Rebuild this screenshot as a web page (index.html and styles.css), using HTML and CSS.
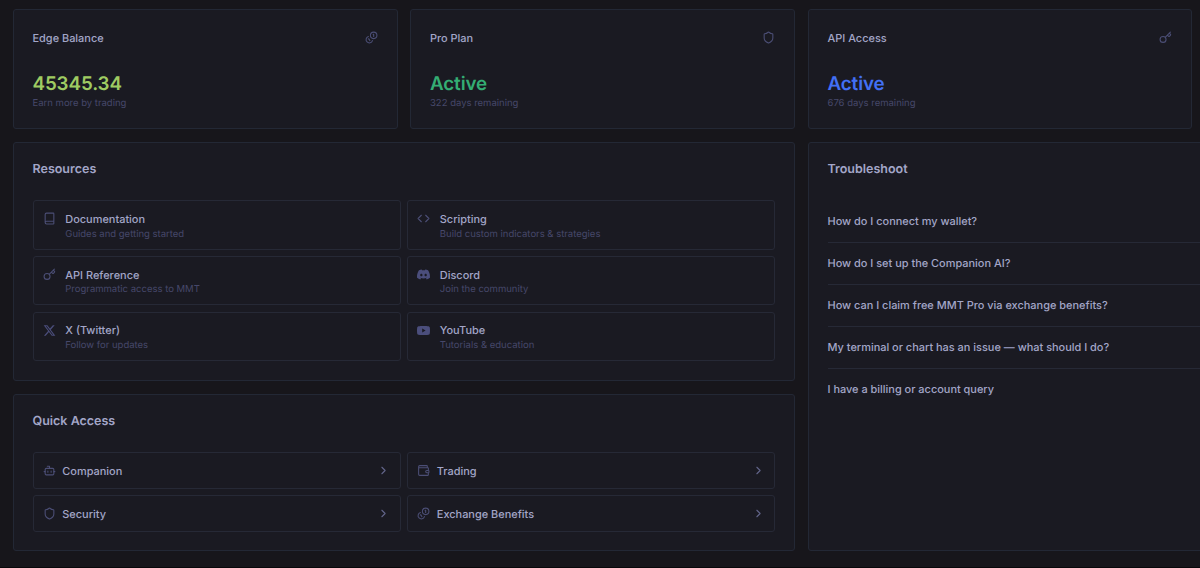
FILE: index.html
```html
<!doctype html>
<html lang="en">
	<head>
		<meta charset="UTF-8" />
		<title>Dashboard</title>
		<link rel="stylesheet" href="styles.css">
	</head>
	<body>
		<svg class="sprite">
			<symbol id="coins" viewBox="0 0 24 24">
				<path d="M13.744 17.736a6 6 0 1 1-7.48-7.48M15 6h1v4M6.134 14.768l.866-.5 2 3.464" />
				<circle cx="16" cy="8" r="6" />
			</symbol>
			<symbol id="shield" viewBox="0 0 24 24">
				<path d="M20 13c0 5-3.5 7.5-7.66 8.95a1 1 0 0 1-.67-.01C7.5 20.5 4 18 4 13V6a1 1 0 0 1 1-1c2 0 4.5-1.2 6.24-2.72a1.17 1.17 0 0 1 1.52 0C14.51 3.81 17 5 19 5a1 1 0 0 1 1 1z" />
			</symbol>
			<symbol id="key" viewBox="0 0 24 24">
				<path d="m15.5 7.5 2.3 2.3a1 1 0 0 0 1.4 0l2.1-2.1a1 1 0 0 0 0-1.4L19 4M21 2l-9.6 9.6" />
				<circle cx="7.5" cy="15.5" r="5.5" />
			</symbol>
			<symbol id="book" viewBox="0 0 24 24">
				<path d="M4 19.5v-15A2.5 2.5 0 0 1 6.5 2H19a1 1 0 0 1 1 1v18a1 1 0 0 1-1 1H6.5a1 1 0 0 1 0-5H20" />
			</symbol>
			<symbol id="code" viewBox="0 0 24 24">
				<path d="m16 18 6-6-6-6M8 6l-6 6 6 6" />
			</symbol>
			<symbol id="bot" viewBox="0 0 24 24">
				<path d="M12 8V4H8M2 14h2M20 14h2M15 13v2M9 13v2" />
				<rect x="4" y="8" width="16" height="12" rx="2" />
			</symbol>
			<symbol id="wallet" viewBox="0 0 24 24">
				<path d="M19 7V4a1 1 0 0 0-1-1H5a2 2 0 0 0 0 4h15a1 1 0 0 1 1 1v4h-3a2 2 0 0 0 0 4h3a1 1 0 0 0 1-1v-2a1 1 0 0 0-1-1M3 5v14a2 2 0 0 0 2 2h15a1 1 0 0 0 1-1v-4" />
			</symbol>
			<symbol id="chevron" viewBox="0 0 24 24">
				<path d="m9 18 6-6-6-6" />
			</symbol>
			<symbol id="x" viewBox="0 0 24 24">
				<path d="M18.244 2.25h3.308l-7.227 8.26 8.502 11.24H16.17l-5.214-6.817L4.99 21.75H1.68l7.73-8.835L1.254 2.25H8.08l4.713 6.231zm-1.161 17.52h1.833L7.084 4.126H5.117z" />
			</symbol>
			<symbol id="discord" viewBox="0 0 24 24">
				<path d="M20.317 4.37a19.79 19.79 0 0 0-4.885-1.515.074.074 0 0 0-.079.037c-.21.375-.444.864-.608 1.25a18.27 18.27 0 0 0-5.487 0 12.64 12.64 0 0 0-.617-1.25.077.077 0 0 0-.079-.037A19.736 19.736 0 0 0 3.677 4.37C.533 9.046-.32 13.58.099 18.058a.082.082 0 0 0 .031.057 19.9 19.9 0 0 0 5.993 3.03.078.078 0 0 0 .084-.028c.462-.63.874-1.295 1.226-1.994a.076.076 0 0 0-.041-.106 13.1 13.1 0 0 1-1.872-.892c.13-.1.25-.19.37-.29a.074.074 0 0 1 .077-.01c3.928 1.793 8.18 1.793 12.062 0 .12.1.25.2.45.3a12.3 12.3 0 0 1-1.873.892c.36.8.77 1.47 1.185 2.1a19.84 19.84 0 0 0 6.086-3.059c.5-5.177-.838-9.674-3.46-13.688zM8.02 15.33c-1.183 0-2.157-1.085-2.157-2.419s.955-2.419 2.157-2.419 2.176 1.096 2.157 2.42c0 1.333-.956 2.418-2.157 2.418zm7.975 0c-1.183 0-2.157-1.085-2.157-2.419s.955-2.419 2.157-2.419 2.176 1.096 2.157 2.42c0 1.333-.946 2.418-2.157 2.418z" />
			</symbol>
			<symbol id="youtube" viewBox="0 0 24 24">
				<path d="M23.5 6.2a3 3 0 0 0-2.1-2.1C19.5 3.5 12 3.5 12 3.5s-7.5 0-9.4.6A3 3 0 0 0 .5 6.2C0 8.1 0 12 0 12s0 3.9.5 5.8a3 3 0 0 0 2.1 2.1c1.9.6 9.4.6 9.4.6s7.5 0 9.4-.6a3 3 0 0 0 2.1-2.1c.5-1.9.5-5.8.5-5.8s0-3.9-.5-5.8zM9.6 15.6V8.4l6.3 3.6z" />
			</symbol>
		</svg>

		<main class="dashboard">
			<section class="card stat">
				<div class="stat-head">Edge Balance <svg class="icon"><use href="#coins" /></svg></div>
				<div class="stat-value lime">45345.34</div>
				<div class="muted">Earn more by trading</div>
			</section>
			<section class="card stat">
				<div class="stat-head">Pro Plan <svg class="icon"><use href="#shield" /></svg></div>
				<div class="stat-value green">Active</div>
				<div class="muted">322 days remaining</div>
			</section>
			<section class="card stat">
				<div class="stat-head">API Access <svg class="icon"><use href="#key" /></svg></div>
				<div class="stat-value blue">Active</div>
				<div class="muted">676 days remaining</div>
			</section>

			<section class="card resources">
				<h2>Resources</h2>
				<div class="links">
					<a class="resource">
						<svg class="icon"><use href="#book" /></svg>
						<div><div class="title">Documentation</div><div class="muted">Guides and getting started</div></div>
					</a>
					<a class="resource">
						<svg class="icon"><use href="#code" /></svg>
						<div><div class="title">Scripting</div><div class="muted">Build custom indicators &amp; strategies</div></div>
					</a>
					<a class="resource">
						<svg class="icon"><use href="#key" /></svg>
						<div><div class="title">API Reference</div><div class="muted">Programmatic access to MMT</div></div>
					</a>
					<a class="resource">
						<svg class="icon solid"><use href="#discord" /></svg>
						<div><div class="title">Discord</div><div class="muted">Join the community</div></div>
					</a>
					<a class="resource">
						<svg class="icon solid"><use href="#x" /></svg>
						<div><div class="title">X (Twitter)</div><div class="muted">Follow for updates</div></div>
					</a>
					<a class="resource">
						<svg class="icon solid"><use href="#youtube" /></svg>
						<div><div class="title">YouTube</div><div class="muted">Tutorials &amp; education</div></div>
					</a>
				</div>
			</section>

			<section class="card troubleshoot">
				<h2>Troubleshoot</h2>
				<ul class="faq">
					<li>How do I connect my wallet?</li>
					<li>How do I set up the Companion AI?</li>
					<li>How can I claim free MMT Pro via exchange benefits?</li>
					<li>My terminal or chart has an issue — what should I do?</li>
					<li>I have a billing or account query</li>
				</ul>
			</section>

			<section class="card quick">
				<h2>Quick Access</h2>
				<div class="links">
					<a class="shortcut">
						<svg class="icon"><use href="#bot" /></svg>
						<span>Companion</span>
						<svg class="icon arrow"><use href="#chevron" /></svg>
					</a>
					<a class="shortcut">
						<svg class="icon"><use href="#wallet" /></svg>
						<span>Trading</span>
						<svg class="icon arrow"><use href="#chevron" /></svg>
					</a>
					<a class="shortcut">
						<svg class="icon"><use href="#shield" /></svg>
						<span>Security</span>
						<svg class="icon arrow"><use href="#chevron" /></svg>
					</a>
					<a class="shortcut">
						<svg class="icon"><use href="#coins" /></svg>
						<span>Exchange Benefits</span>
						<svg class="icon arrow"><use href="#chevron" /></svg>
					</a>
				</div>
			</section>
		</main>
	</body>
</html>
```
FILE: styles.css
```css
* {
	box-sizing: border-box;
}
body {
	margin: 0;
	height: 568px;
	overflow: hidden;
	background-color: #17161b;
	border-bottom: 1px solid #08080a;
	color: #a3a6c8;
	font-family: Inter, sans-serif;
	font-size: 10.95px;
	font-weight: 500;
	line-height: 16px;
	text-rendering: geometricPrecision;
}
.sprite {
	display: none;
}
.dashboard {
	display: grid;
	grid-template-columns: 385px 385px 384.5px;
	grid-template-rows: 120px 239px 157px;
	gap: 13px 12.5px;
	padding: 9px 0 0 12.5px;
}
.card {
	border: 1px solid #232835;
	border-radius: 3px;
	background-color: #1a1a22;
	padding: 18px 19px;
}
.resources,
.quick {
	grid-column: 1 / 3;
}
.troubleshoot {
	grid-column: 3;
	grid-row: 2 / 4;
	width: 420px;
}
.stat-head {
	display: flex;
	justify-content: space-between;
	align-items: center;
	margin-top: 1.5px;
}
.stat-value {
	margin-top: 25.5px;
	font-size: 18.8px;
	font-weight: 600;
	letter-spacing: -0.1px;
	line-height: 26px;
}
.lime {
	color: #9fcb62;
}
.green {
	color: #34ad74;
}
.blue {
	color: #4270f5;
}
.muted {
	color: #46486a;
	font-size: 9.5px;
	font-weight: 400;
	line-height: 13px;
}
h2 {
	margin: 0;
	font-size: 12.5px;
	font-weight: 600;
	line-height: 17px;
}
.icon {
	flex: none;
	width: 13px;
	height: 13px;
	fill: none;
	stroke: #4b4e75;
	stroke-width: 2;
	stroke-linecap: round;
	stroke-linejoin: round;
}
.icon.solid {
	fill: #4b4e7c;
	stroke: none;
}
.links {
	display: grid;
	grid-template-columns: 1fr 1fr;
	gap: 6.5px;
	margin-top: 22.4px;
}
.resource,
.shortcut {
	display: flex;
	border: 1px solid #262936;
	border-radius: 3px;
}
.resource {
	height: 49.3px;
	padding: 9.5px 9.3px;
	gap: 9.5px;
}
.resource .icon {
	margin-top: 1.5px;
}
.resource .muted {
	margin-top: 0.7px;
}
.shortcut {
	align-items: center;
	height: 36.5px;
	padding: 0 9.3px;
	gap: 6.5px;
}
.shortcut .arrow {
	margin-left: auto;
	stroke: #62658a;
}
.faq {
	list-style: none;
	margin: 23px 0 0;
	padding: 0;
}
.faq li {
	height: 42.1px;
	padding-top: 12px;
	border-bottom: 1px solid #262936;
}
.faq li:last-child {
	border-bottom: none;
}
```
